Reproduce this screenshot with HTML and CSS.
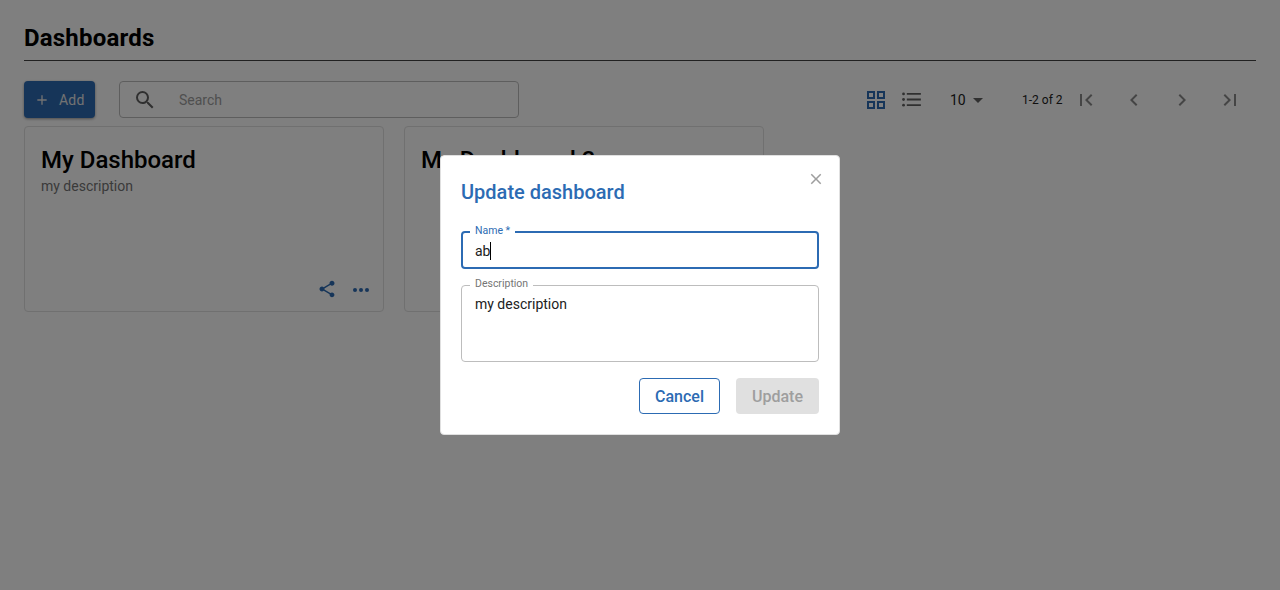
FILE: index.html
```html
<!DOCTYPE html>
<html lang="en">
<head>
<meta charset="utf-8">
<title>Dashboards</title>
<link rel="stylesheet" href="styles.css">
</head>
<body>
<main class="page">
  <h1 class="page-title">Dashboards</h1>
  <div class="toolbar">
    <button class="add-btn">
      <svg class="add-icon" viewBox="0 0 24 24"><path d="M19 13h-6v6h-2v-6H5v-2h6V5h2v6h6v2z"/></svg>
      <span>Add</span>
    </button>
    <div class="search">
      <svg class="search-icon" viewBox="0 0 24 24"><path d="M15.5 14h-.79l-.28-.27A6.47 6.47 0 0 0 16 9.5 6.5 6.5 0 1 0 9.5 16c1.61 0 3.09-.59 4.23-1.57l.27.28v.79l5 4.99L20.49 19l-4.99-5zm-6 0C7.01 14 5 11.99 5 9.5S7.01 5 9.5 5 14 7.01 14 9.5 11.99 14 9.500 14z"/></svg>
      <span class="search-text">Search</span>
    </div>
    <div class="view-controls">
      <svg class="view-icon grid-icon" viewBox="0 0 18 18"><path d="M0 0h8v8H0zM2 2v4h4V2zM10 0h8v8h-8zM12 2v4h4V2zM0 10h8v8H0zM2 12v4h4v-4zM10 10h8v8h-8zM12 12v4h4v-4z" fill-rule="evenodd"/></svg>
      <svg class="view-icon list-icon" viewBox="0 0 20 16"><circle cx="1.500" cy="2" r="1.500"/><circle cx="1.500" cy="8" r="1.500"/><circle cx="1.500" cy="14" r="1.500"/><path d="M5 1h15v2H5zM5 7h15v2H5zM5 13h15v2H5z"/></svg>
    </div>
    <div class="per-page"><span>10</span><span class="caret"></span></div>
    <div class="pager">
      <span class="range">1-2 of 2</span>
      <svg class="pager-icon" viewBox="0 0 24 24"><path d="M18.410 16.590 13.820 12l4.590-4.590L17 6l-6 6 6 6zM6 6h2v12H6z"/></svg>
      <svg class="pager-icon" viewBox="0 0 24 24"><path d="M15.410 16.590 10.830 12l4.580-4.590L14 6l-6 6 6 6z"/></svg>
      <svg class="pager-icon" viewBox="0 0 24 24"><path d="M8.590 16.590 13.170 12 8.590 7.410 10 6l6 6-6 6z"/></svg>
      <svg class="pager-icon" viewBox="0 0 24 24"><path d="M5.590 7.410 10.180 12l-4.590 4.590L7 18l6-6-6-6zM16 6h2v12h-2z"/></svg>
    </div>
  </div>
  <div class="cards">
    <article class="card">
      <h2 class="card-title">My Dashboard</h2>
      <p class="card-desc">my description</p>
      <div class="card-actions">
        <svg class="share-icon" viewBox="0 0 24 24"><path d="M18 16.080c-.76 0-1.440.3-1.960.77L8.910 12.700c.05-.23.09-.46.09-.7s-.04-.47-.09-.7l7.050-4.110c.54.5 1.250.81 2.040.81 1.660 0 3-1.340 3-3s-1.340-3-3-3-3 1.340-3 3c0 .24.040.47.090.7L8.040 9.810C7.500 9.310 6.790 9 6 9c-1.660 0-3 1.340-3 3s1.340 3 3 3c.79 0 1.500-.31 2.040-.81l7.120 4.160c-.05.21-.08.43-.08.65 0 1.610 1.310 2.920 2.920 2.920s2.920-1.310 2.920-2.920-1.310-2.920-2.920-2.920z"/></svg>
        <svg class="more-icon" viewBox="0 0 18 4"><circle cx="3" cy="2" r="2"/><circle cx="9" cy="2" r="2"/><circle cx="15" cy="2" r="2"/></svg>
      </div>
    </article>
    <article class="card">
      <h2 class="card-title">My Dashboard 2</h2>
    </article>
  </div>
</main>
<div class="backdrop"></div>
<div class="modal-layer">
  <section class="modal">
    <svg class="close-icon" viewBox="0 0 24 24"><path d="M19 6.410 17.590 5 12 10.590 6.410 5 5 6.410 10.590 12 5 17.590 6.410 19 12 13.410 17.590 19 19 17.590 13.410 12z"/></svg>
    <h2 class="modal-title">Update dashboard</h2>
    <div class="field field-name">
      <span class="field-label">Name *</span>
      <span class="field-value">ab<span class="cursor"></span></span>
    </div>
    <div class="field field-desc">
      <span class="field-label">Description</span>
      <span class="field-value">my description</span>
    </div>
    <div class="modal-actions">
      <button class="btn btn-cancel">Cancel</button>
      <button class="btn btn-update">Update</button>
    </div>
  </section>
</div>
</body>
</html>
```
FILE: styles.css
```css
* { box-sizing: border-box; }
html, body { margin: 0; height: 100%; overflow: hidden; }
body { font-family: Roboto, "Liberation Sans", sans-serif; background: #fff; color: #000; }
.page { padding: 20px 24px 0; }
.page-title {
  margin: 0; font-size: 24px; font-weight: 700; line-height: 37px; height: 41px; letter-spacing: .2px;
  border-bottom: 1px solid #424242;
}
.toolbar { display: flex; align-items: center; margin-top: 20px; height: 37px; padding-right: 14px; }
.add-btn {
  display: flex; align-items: center; width: 71px; height: 37px; padding: 0 0 0 10px; border: 0; border-radius: 4px;
  background: #2c6bb3; color: #e4e4e4; font: 400 14px Roboto, sans-serif; letter-spacing: .2px;
  box-shadow: 0 1px 3px rgba(0,0,0,.4);
}
.add-icon { width: 16px; height: 16px; fill: #e4e4e4; margin-right: 9px; }
.search {
  display: flex; align-items: center; margin-left: 24px; width: 400px; height: 37px;
  border: 1px solid #bdbdbd; border-radius: 4px; padding-left: 13px;
}
.search-icon { width: 24px; height: 24px; fill: #616161; }
.search-text { margin-left: 22px; font-size: 14px; color: #9e9e9e; }
.view-controls { display: flex; align-items: center; margin-left: auto; gap: 17px; }
.view-icon { display: block; fill: #2c6bb3; }
.grid-icon { width: 18px; height: 18px; }
.list-icon { width: 19px; height: 15px; fill: #616161; }
.per-page { display: flex; align-items: center; margin-left: 29px; font-size: 14px; color: #212121; width: 72px; }
.caret { margin-left: 7px; margin-top: 2px; border: 5px solid transparent; border-top-color: #616161; border-bottom: 0; }
.pager { display: flex; align-items: center; font-size: 12px; color: #212121; }
.range { white-space: nowrap; width: 52px; }
.pager-icon { width: 24px; height: 24px; fill: #8a8a8a; margin-left: 24px; }
.range + .pager-icon { margin-left: 0; }
.cards { display: flex; gap: 20px; margin-top: 8px; }
.card {
  position: relative; width: 360px; height: 186px; padding: 20px 16px 0; border: 1px solid #e0e0e0; border-radius: 4px;
}
.card-title { margin: 0; font-size: 24px; font-weight: 500; line-height: 26px; }
.card-desc { margin: 3px 0 0; font-size: 14px; line-height: 20px; color: #757575; }
.card-actions { position: absolute; right: 13px; bottom: 12px; display: flex; align-items: center; gap: 15px; }
.share-icon { width: 20px; height: 20px; fill: #2c6bb3; }
.more-icon { width: 18px; height: 4px; fill: #2c6bb3; margin-top: 2px; }
.backdrop { position: fixed; inset: 0; background: rgba(0,0,0,.5); }
.modal-layer { position: fixed; inset: 0; display: flex; align-items: center; justify-content: center; }
.modal {
  position: relative; width: 400px; height: 280px; padding: 20px 20px 0; background: #fff; border-radius: 4px; border: 1px solid #e0e0e0;
}
.close-icon { position: absolute; top: 14px; right: 14px; width: 18px; height: 18px; fill: #9e9e9e; }
.modal-title { margin: 0; font-size: 20px; font-weight: 500; line-height: 32px; color: #2c6bb3; }
.field { position: relative; width: 358px; border-radius: 4px; }
.field-name { margin-top: 23px; height: 38px; border: 2px solid #2c6bb3; padding: 2px 12px 0; display: flex; align-items: center; }
.field-desc { margin-top: 16px; height: 77px; border: 1px solid #bdbdbd; padding: 8px 13px; }
.field-label {
  position: absolute; top: -8px; left: 8px; padding: 0 5px; background: #fff; font-size: 10.500px; line-height: 12px; color: #757575;
}
.field-name .field-label { left: 7px; top: -8px; color: #2c6bb3; }
.field-value { font-size: 14px; line-height: 20px; color: #212121; display: flex; align-items: center; }
.cursor { display: inline-block; width: 1px; height: 18px; background: #000; }
.modal-actions { display: flex; justify-content: flex-end; gap: 16px; margin-top: 16px; width: 358px; }
.btn { height: 36px; border-radius: 4px; font: 500 16px Roboto, sans-serif; padding: 0; }
.btn-cancel { width: 81px; border: 1px solid #2c6bb3; background: #fff; color: #2c6bb3; }
.btn-update { width: 83px; border: 0; background: #e0e0e0; color: #9e9e9e; }
```
